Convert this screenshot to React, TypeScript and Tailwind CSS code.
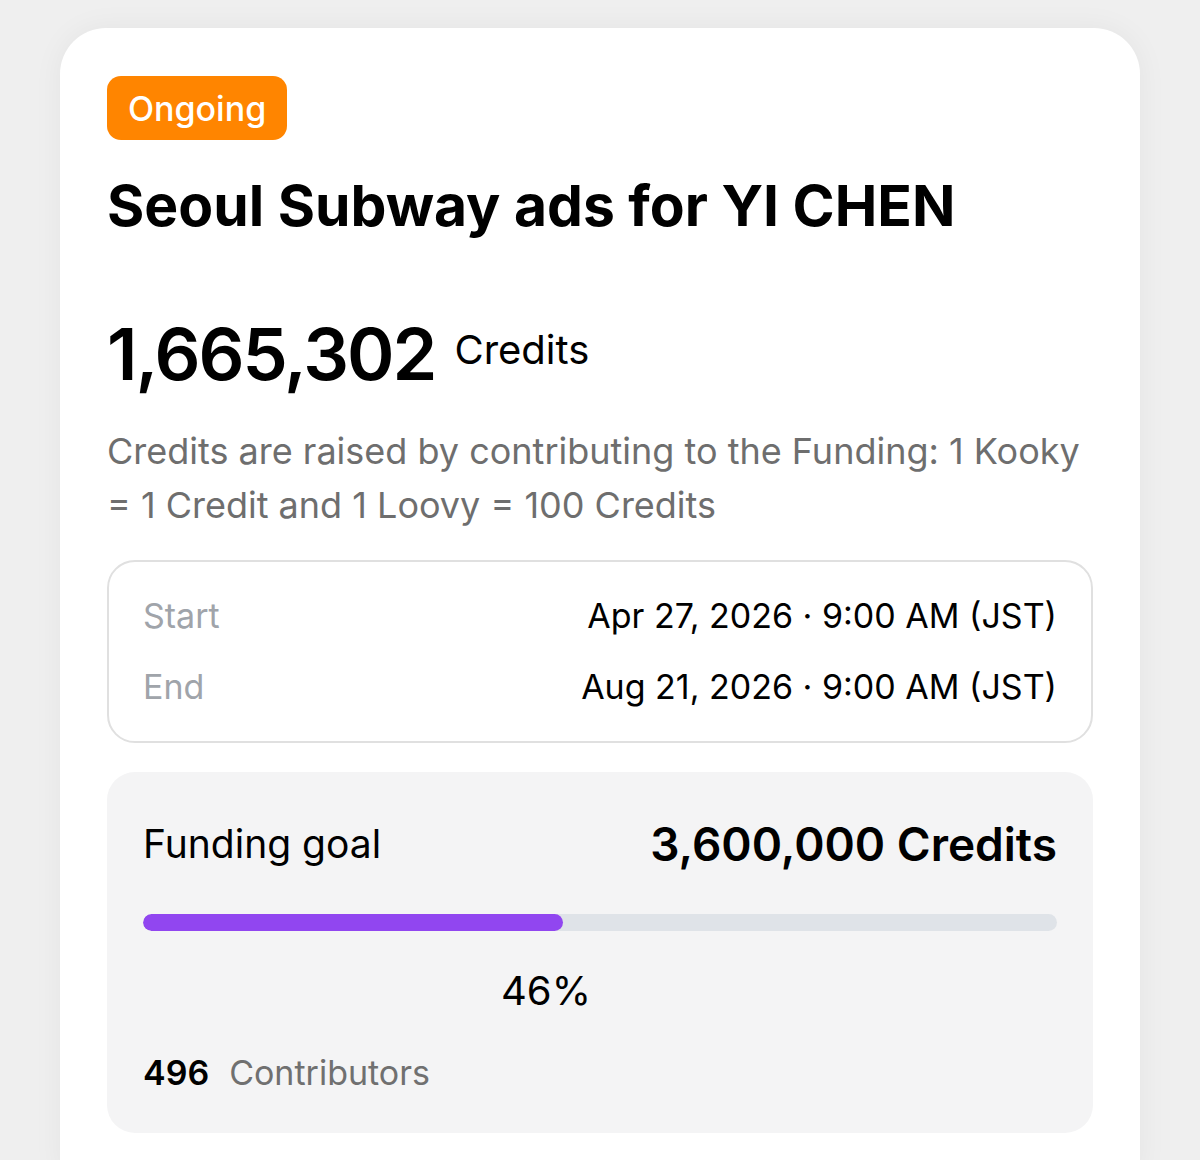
export default function App() {
  return (
    <div className="min-h-[1160px] bg-[#efefef] px-[60px] pt-[28px] font-['Inter',sans-serif]">
      <div className="rounded-t-[46px] bg-white px-[47px] pt-[48px] pb-[40px] shadow-[0_0_30px_rgba(0,0,0,0.05)]">
        <span className="inline-flex h-[64px] items-center rounded-[14px] bg-[#ff8500] px-[21px] text-[34px] font-medium text-white">
          Ongoing
        </span>
        <h1 className="mt-[30px] text-[57px] font-bold leading-[72px] text-black">
          Seoul Subway ads for YI CHEN
        </h1>
        <div className="mt-[72px] flex items-center gap-[19px]">
          <span className="text-[72px] font-semibold leading-[80px] tracking-[-2px] text-black">1,665,302</span>
          <span className="-mt-[8px] text-[40px] text-black">Credits</span>
        </div>
        <p className="mt-[30px] text-[36px] leading-[54px] text-[#6e6e6e]">
          Credits are raised by contributing to the Funding: 1 Kooky = 1 Credit and 1 Loovy = 100 Credits
        </p>
        <div className="mt-[28px] flex flex-col gap-[26px] rounded-[28px] border-2 border-[#e0e0e0] px-[34px] pt-[31px] pb-[32px] text-[34px] leading-[45px]">
          <div className="flex justify-between">
            <span className="text-[#a0a4aa]">Start</span>
            <span className="text-black">Apr 27, 2026 · 9:00 AM (JST)</span>
          </div>
          <div className="flex justify-between">
            <span className="text-[#a0a4aa]">End</span>
            <span className="text-black">Aug 21, 2026 · 9:00 AM (JST)</span>
          </div>
        </div>
        <div className="mt-[29px] rounded-[28px] bg-[#f4f4f5] px-[36px] pt-[38px] pb-[35px]">
          <div className="flex items-center justify-between">
            <span className="text-[39px] text-black">Funding goal</span>
            <span className="text-[46px] font-semibold text-black">3,600,000 Credits</span>
          </div>
          <div className="mt-[35px] h-[17px] w-full overflow-hidden rounded-full bg-[#dfe3e8]">
            <div className="h-full rounded-full bg-[#9146f0]" style={{ width: "46%" }} />
          </div>
          <div className="mt-[36px] pl-[358px] text-[40px] leading-[48px] text-black">46%</div>
          <div className="mt-[32px] flex items-baseline gap-[20px]">
            <span className="text-[34px] font-semibold text-black">496</span>
            <span className="text-[34px] text-[#707070]">Contributors</span>
          </div>
        </div>
      </div>
    </div>
  );
}
